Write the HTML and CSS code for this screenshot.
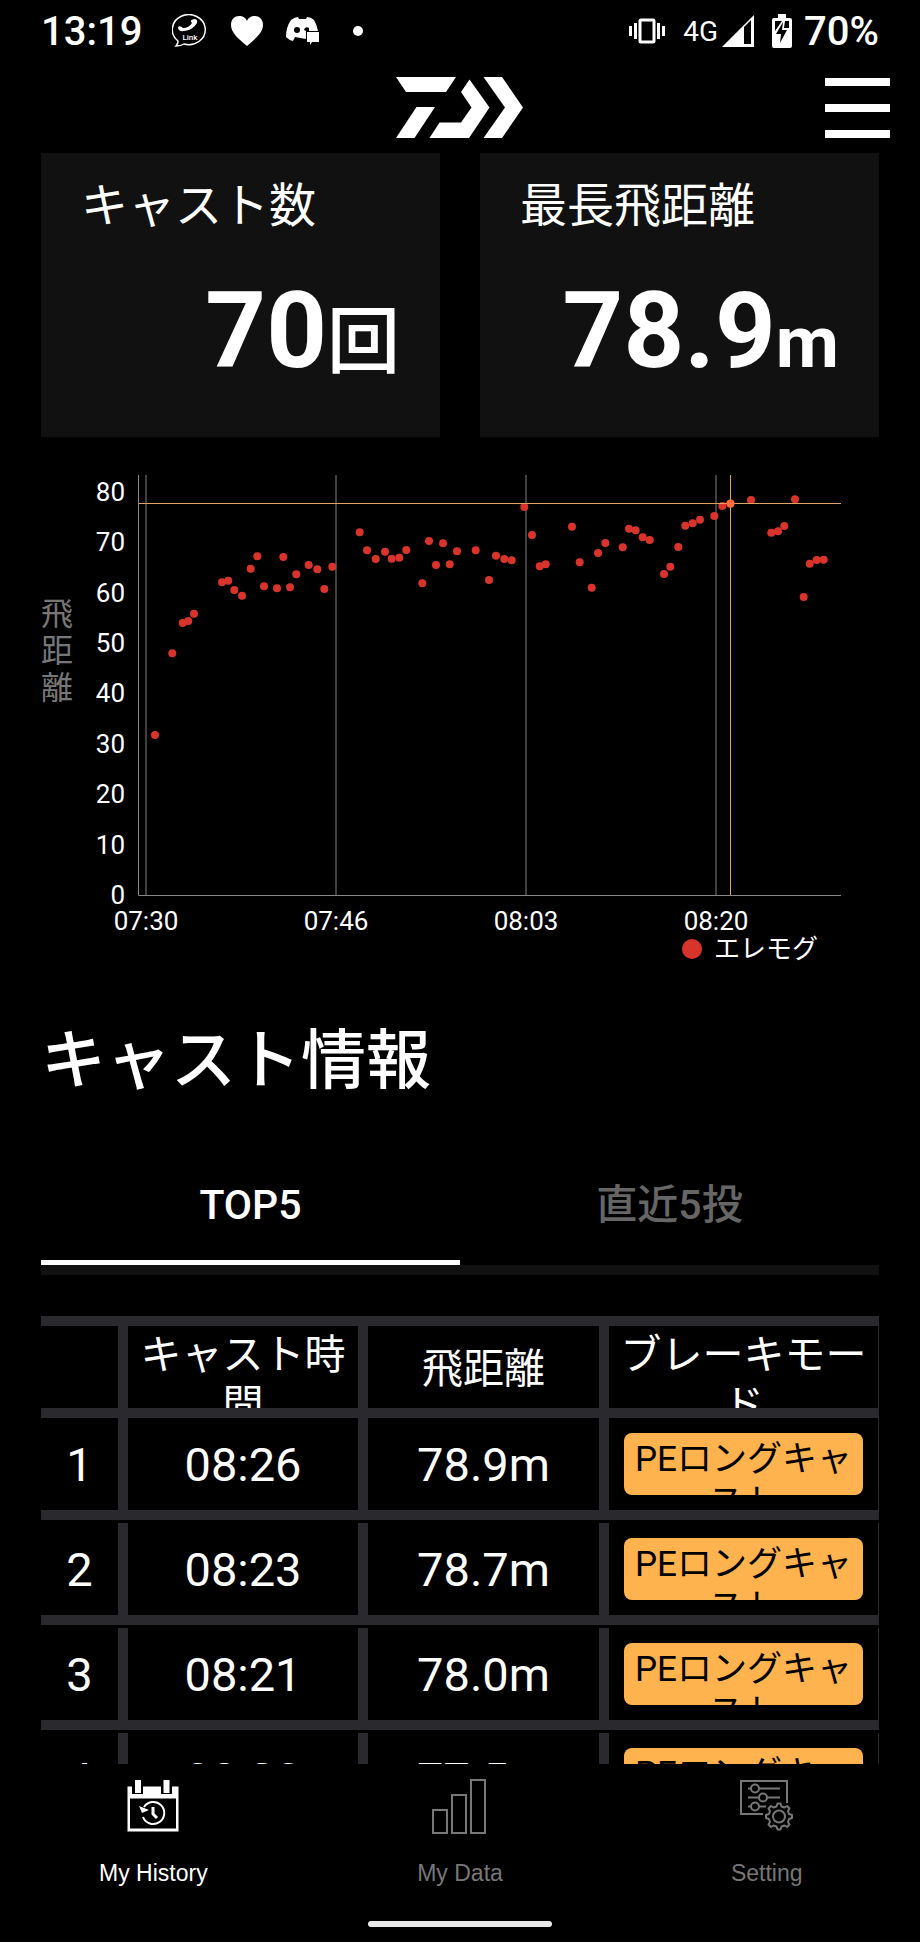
FILE: index.html
```html
<!DOCTYPE html>
<html lang="ja">
<head>
    <meta charset="UTF-8">
    <meta name="viewport" content="width=device-width, initial-scale=1.0">
    <title>キャスト情報</title>
    <link rel="stylesheet" href="styles.css">
</head>
<body>
    <!-- ステータスバー -->
    <div class="status-bar">
        <span class="clock">13:19</span>
        <div class="status-icons">
            <svg width="36" height="34" viewBox="0 0 36 34">
                <path d="M6 27 A16.500 15 0 1 1 12 30 Q9 32 4 32 Q6 30 6 27Z" fill="none" stroke="#fff" stroke-width="1.500"/>
                <path d="M6 13 Q8 11 11 14 Q17 14 20 9 Q17 6 22 5 Q26 5 25 9 Q21 16 12 17 Q6 18 6 13Z" fill="#fff"/>
                <text class="link-text" x="18" y="26" text-anchor="middle">Link</text>
            </svg>
            <svg width="32" height="32" viewBox="0 0 32 32">
                <path d="M16 31 C8 24 0 18 0 10 C0 4 4 1 8 1 C12 1 15 3 16 6 C17 3 20 1 24 1 C28 1 32 4 32 10 C32 18 24 24 16 31Z" fill="#fff"/>
            </svg>
            <svg width="34" height="30" viewBox="0 0 34 30">
                <path d="M5 4 Q9 1 12 1 L13 3 H20 L21 1 Q25 1 28 4 Q31 9 32 15 H20 V23 L9 21 L7 25 Q3 24 0 21 Q0 11 5 4Z" fill="#fff"/>
                <ellipse cx="11" cy="14" rx="3" ry="3" fill="#000"/>
                <path d="M18 14 a3 3 0 0 1 5 -2 V15 H20Z" fill="#000"/>
                <path d="M21 16 H33 V26 H26 L24 29 V26 H21Z" fill="#fff"/>
            </svg>
            <svg class="more-dot" width="10" height="10" viewBox="0 0 10 10">
                <circle cx="5" cy="5" r="5" fill="#fff"/>
            </svg>
        </div>
        <div class="status-right">
            <svg class="vibrate" width="36" height="28" viewBox="0 0 36 28">
                <rect x="11" y="3" width="14" height="22" rx="1" fill="none" stroke="#fff" stroke-width="3"/>
                <path d="M1.500 9v10M6.500 6v16M29.500 6v16M34.500 9v10" stroke="#fff" stroke-width="3"/>
            </svg>
            <span class="network">4G</span>
            <svg class="signal" width="32" height="32" viewBox="0 0 32 32">
                <path d="M0 32 L32 0 V32Z M22 12 V29 H29 V5Z" fill="#fff" fill-rule="evenodd"/>
            </svg>
            <svg width="20" height="34" viewBox="0 0 20 34">
                <path d="M6 0 H14 V4 H18 Q20 4 20 6 V32 Q20 34 18 34 H2 Q0 34 0 32 V6 Q0 4 2 4 H6Z" fill="#fff"/>
                <path d="M3 7 H10 L3 17Z M13 7 H17 V14 H12Z" fill="#000"/>
                <path d="M11 8 L4 20 H9 L8 29 L15 16 H10Z" fill="#000"/>
            </svg>
            <span class="battery">70%</span>
        </div>
    </div>

    <header class="header">
        <svg class="logo" width="128" height="61" viewBox="0 0 128 61">
            <path d="M0 0H60L50 15H10Z"/>
            <path d="M20.500 30H39L18.500 61H0Z"/>
            <path d="M43.500 45.500H65L75.500 30.500L65 15L73.500 2.500L93.500 30.500L73 61H33.500Z"/>
            <path d="M87.500 0H106L127 30.500L106 61H87.500L109 30.500Z"/>
        </svg>
        <button class="menu-button" type="button" aria-label="メニュー">
            <span></span>
            <span></span>
            <span></span>
        </button>
    </header>

    <main class="content">
        <section class="summary">
            <div class="card">
                <h2>キャスト数</h2>
                <p class="value">70<span class="unit-count">回</span></p>
            </div>
            <div class="card">
                <h2>最長飛距離</h2>
                <p class="value">78.9<span>m</span></p>
            </div>
        </section>

        <!-- 飛距離グラフ -->
        <svg class="chart" viewBox="0 0 838 504">
            <text class="axis-title">
                <tspan x="0" y="165">飛</tspan>
                <tspan x="0" y="202">距</tspan>
                <tspan x="0" y="239">離</tspan>
            </text>
            <g class="y-labels">
                <text x="84" y="41">80</text>
                <text x="84" y="91">70</text>
                <text x="84" y="142">60</text>
                <text x="84" y="192">50</text>
                <text x="84" y="242">40</text>
                <text x="84" y="293">30</text>
                <text x="84" y="343">20</text>
                <text x="84" y="394">10</text>
                <text x="84" y="444">0</text>
            </g>
            <path class="grid" d="M105 15V435M295 15V435M485 15V435M675 15V435"/>
            <path class="axis" d="M97.500 15V435.500H800"/>
            <g class="x-labels">
                <text x="105" y="470">07:30</text>
                <text x="295" y="470">07:46</text>
                <text x="485" y="470">08:03</text>
                <text x="675" y="470">08:20</text>
            </g>
            <g class="dots" id="dots"></g>
            <path class="cursor" d="M98 43.500H800M689.500 15V435"/>
            <circle class="selected" cx="689.500" cy="43.500" r="4"/>
            <circle class="legend-dot" cx="651" cy="489" r="10"/>
            <text class="legend" x="673" y="498">エレモグ</text>
        </svg>

        <h1>キャスト情報</h1>

        <div class="tabs" role="tablist">
            <button class="tab active" type="button" role="tab" aria-selected="true">TOP5</button>
            <button class="tab" type="button" role="tab" aria-selected="false">直近5投</button>
        </div>

        <table class="cast-table">
            <colgroup>
                <col class="col-rank">
                <col class="col-time">
                <col>
                <col class="col-brake">
            </colgroup>
            <thead>
                <tr>
                    <th></th>
                    <th><div class="head">キャスト時間</div></th>
                    <th><div class="head">飛距離</div></th>
                    <th><div class="head">ブレーキモード</div></th>
                </tr>
            </thead>
            <tbody>
                <tr>
                    <td>1</td>
                    <td>08:26</td>
                    <td>78.9m</td>
                    <td><div class="badge">PEロングキャスト</div></td>
                </tr>
                <tr>
                    <td>2</td>
                    <td>08:23</td>
                    <td>78.7m</td>
                    <td><div class="badge">PEロングキャスト</div></td>
                </tr>
                <tr>
                    <td>3</td>
                    <td>08:21</td>
                    <td>78.0m</td>
                    <td><div class="badge">PEロングキャスト</div></td>
                </tr>
                <tr>
                    <td>4</td>
                    <td>08:20</td>
                    <td>77.5m</td>
                    <td><div class="badge">PEロングキャスト</div></td>
                </tr>
            </tbody>
        </table>
    </main>

    <nav class="bottom-nav">
        <div class="nav-items">
            <a href="#history" class="active">
                <svg width="54" height="54" viewBox="0 0 54 54">
                    <path d="M1.500 7.500H6V15H17V7.500H35V15H46V7.500H52.500V52.500H1.500Z M4 19.500V49.500H50V19.500Z" fill="currentColor" fill-rule="evenodd"/>
                    <path d="M9 1H15V14H9ZM37.500 1H43.500V14H37.500Z" fill="currentColor"/>
                    <path d="M17 38 A11 11 0 1 0 18 28" fill="none" stroke="currentColor" stroke-width="2"/>
                    <path d="M13 27L16 34L23 31Z" fill="currentColor"/>
                    <path d="M27 28V35L31 39" fill="none" stroke="currentColor" stroke-width="3"/>
                </svg>
                My History
            </a>
            <a href="#data">
                <svg width="54" height="54" viewBox="0 0 54 54">
                    <path d="M0 31H14V54H0ZM19 16H33V54H19ZM38 1H52V54H38Z" fill="none" stroke="currentColor" stroke-width="2"/>
                </svg>
                My Data
            </a>
            <a href="#setting">
                <svg width="54" height="54" viewBox="0 0 54 54">
                    <path d="M47 24V2H1V35H23" fill="none" stroke="currentColor" stroke-width="2"/>
                    <path d="M8 9.500H11M19 9.500H40M8 18.500H19M27 18.500H40M8 27.500H11M19 27.500H26" stroke="currentColor" stroke-width="2"/>
                    <g fill="none" stroke="currentColor" stroke-width="2">
                        <circle cx="15" cy="9.500" r="4"/>
                        <circle cx="23" cy="18.500" r="4"/>
                        <circle cx="15" cy="27.500" r="4"/>
                        <circle cx="39" cy="37.500" r="6"/>
                        <path d="M36.500 27.500 L37.500 24.500 H40.500 L41.500 27.500 L44.500 28.500 L47 27 L49.500 29.500 L48 32 L49 35 L52 36 V39 L49 40 L48 43 L49.500 45.500 L47 48 L44.500 46.500 L41.500 47.500 L40.500 50.500 H37.500 L36.500 47.500 L33.500 46.500 L31 48 L28.500 45.500 L30 43 L29 40 L26 39 V36 L29 35 L30 32 L28.500 29.500 L31 27 L33.500 28.500Z" stroke-linejoin="round"/>
                    </g>
                </svg>
                Setting
            </a>
        </div>
        <div class="home-bar"></div>
    </nav>

    <script src="chart.js"></script>
</body>
</html>
```
FILE: styles.css
```css
:root {
    --bg-color: #000;
    --card-bg: #111;
    --text-color: #fff;
    --muted: #666;
    --line: #2a292e;
    --red: #d9342b;
    --orange: #ffb34e;
}

* {
    box-sizing: border-box;
}

body {
    margin: 0;
    height: 100vh;
    display: flex;
    flex-direction: column;
    overflow: hidden;
    background-color: var(--bg-color);
    color: var(--text-color);
    font-family: Roboto, "Noto Sans CJK JP", sans-serif;
}

h1, h2, p {
    margin: 0;
}

button {
    background: none;
    border: none;
    padding: 0;
    color: inherit;
    font-family: inherit;
}

/* ステータスバー */
.status-bar {
    display: flex;
    align-items: center;
    height: 62px;
    padding: 0 41px;
    font-size: 40px;
    font-weight: 500;
}

.status-icons,
.status-right {
    display: flex;
    align-items: center;
}

.status-icons {
    gap: 23px;
    margin-left: 30px;
}

.more-dot {
    margin-left: 10px;
}

.status-right {
    margin-left: auto;
    gap: 12px;
}

.link-text {
    font-size: 8px;
    font-weight: 500;
    fill: #fff;
}

.vibrate {
    margin-right: 6px;
}

.network {
    font-size: 28px;
    font-weight: 400;
}

.signal {
    margin: 0 6px 0 -8px;
}

.header {
    display: grid;
    grid-template-columns: 1fr auto 1fr;
    align-items: center;
    height: 91px;
    padding: 0 30px;
}

.logo {
    grid-column: 2;
    fill: #fff;
}

.menu-button {
    justify-self: end;
    display: flex;
    flex-direction: column;
    gap: 18px;
    width: 65px;
}

.menu-button span {
    height: 8px;
    background-color: #fff;
}

.content {
    flex: 1;
    min-height: 0;
    overflow: hidden;
    padding: 0 41px;
}

/* 集計カード */
.summary {
    display: grid;
    grid-template-columns: 1fr 1fr;
    gap: 40px;
}

.card {
    height: 284px;
    padding: 25px 40px;
    background-color: var(--card-bg);
}

.card h2 {
    font-size: 47px;
    font-weight: 400;
    line-height: 56px;
}

.value {
    margin-top: 61px;
    font-size: 106px;
    font-weight: 700;
    line-height: 72px;
    text-align: right;
}

.value span {
    font-size: 73px;
}

.value .unit-count {
    font-weight: 500;
}

/* グラフ */
.chart {
    display: block;
    width: 100%;
    margin-top: 23px;
    font-size: 26px;
    fill: #fff;
}

.axis-title {
    font-size: 32px;
    fill: #777;
}

.y-labels {
    text-anchor: end;
}

.x-labels {
    text-anchor: middle;
}

.grid,
.axis,
.cursor {
    fill: none;
    stroke-width: 1;
}

.grid {
    stroke: #404040;
    stroke-width: 2;
}

.axis {
    stroke: #888;
}

.cursor {
    stroke: #e2a263;
}

.dots,
.legend-dot {
    fill: var(--red);
}

.selected {
    fill: #ff6b3d;
}

h1 {
    margin-top: 57px;
    font-size: 65px;
    font-weight: 500;
    line-height: 80px;
}

.tabs {
    display: flex;
    margin-top: 48px;
    border-bottom: 10px solid var(--card-bg);
}

.tab {
    flex: 1;
    height: 116px;
    border-bottom: 5px solid transparent;
    color: var(--muted);
    font-size: 41px;
    font-weight: 500;
    line-height: 48px;
}

.tab.active {
    color: var(--text-color);
    border-bottom-color: #fff;
}

/* キャスト一覧 */
.cast-table {
    width: 100%;
    margin-top: 41px;
    table-layout: fixed;
    border-collapse: separate;
    border-spacing: 0;
    border-top: 10px solid var(--line);
    font-size: 47px;
    text-align: center;
}

.col-rank {
    width: 87px;
}

.col-time {
    width: 240px;
}

.col-brake {
    width: 270px;
}

.cast-table th,
.cast-table td {
    padding: 0 10px 0 0;
    border-bottom: 10px solid var(--line);
    background: linear-gradient(var(--line), var(--line)) right / 10px 100% no-repeat padding-box;
    font-weight: 400;
}

.cast-table th {
    height: 92px;
    font-size: 41px;
}

.cast-table td {
    height: 102px;
    padding-top: 1px;
}

.cast-table th:last-child,
.cast-table td:last-child {
    padding: 0 1px 0 0;
    background-size: 1px 100%;
}

.cast-table tbody tr + tr td {
    height: 105px;
    border-top: 3px solid var(--bg-color);
}

.head {
    display: flex;
    flex-direction: column;
    justify-content: safe center;
    height: 82px;
    padding-top: 4px;
    line-height: 50px;
    overflow: hidden;
}

.badge {
    height: 62px;
    margin: 0 15px;
    padding: 5px 10px;
    border-radius: 8px;
    background-color: var(--orange);
    color: #000;
    font-size: 35px;
    line-height: 43px;
    overflow: hidden;
}

/* 下部ナビ */
.bottom-nav {
    display: flex;
    flex-direction: column;
    align-items: center;
    justify-content: space-between;
    height: 178px;
    padding: 15px 0;
}

.nav-items {
    display: flex;
    width: 100%;
}

.nav-items a {
    flex: 1;
    display: flex;
    flex-direction: column;
    align-items: center;
    gap: 26px;
    color: #777;
    font-family: "Liberation Sans", Arial, sans-serif;
    font-size: 23px;
    line-height: 28px;
    text-decoration: none;
}

.nav-items svg {
    overflow: visible;
}

.nav-items a.active {
    color: #fff;
}

.home-bar {
    width: 20%;
    height: 6px;
    border-radius: 3px;
    background-color: #e8e8e8;
}
```
FILE: chart.js
```javascript
// キャストごとのプロット位置
const casts = [
    [114, 275], [131.3, 193.3], [141.7, 163], [147.3, 161], [153, 153.7],
    [181, 122.3], [187.3, 120.7], [193.3, 130], [201, 135.7], [209.7, 108.7],
    [216.3, 96.3], [223, 126.3], [236, 128.3], [242.3, 97], [249, 127.3],
    [255.3, 114.3], [267.7, 105], [276.3, 109.3], [283.3, 129], [291.3, 106.7],
    [318.7, 72.3], [326, 90.3], [334.7, 99], [344, 91.7], [350.7, 98.7],
    [358.3, 97.7], [365.3, 90], [381.3, 123.3], [388, 81], [395, 105],
    [402, 83.3], [408.7, 104.3], [416, 91.3], [434.7, 90.3], [448, 120],
    [455, 95.7], [463.3, 99], [470.7, 100.3], [483.3, 47], [491, 75],
    [498.7, 106.3], [504.7, 104.3], [531, 66.7], [538.7, 102.3], [550.7, 127.7],
    [557, 93], [564.3, 83], [581.7, 87.3], [588, 68.7], [594.7, 70.3],
    [601.7, 77.3], [608.7, 80], [623, 114], [629.3, 106.7], [637.3, 87],
    [644.3, 65.7], [651.7, 63.3], [659, 59.7], [673.3, 56], [681.3, 46],
    [689.3, 43.7], [710, 40], [730.3, 72.7], [737, 71.3], [743.3, 66],
    [754, 39.3], [762.7, 137], [768.7, 103.7], [775.7, 100], [782.7, 99.7]
];

const dots = document.getElementById('dots');

casts.forEach(([x, y]) => {
    const dot = document.createElementNS('http://www.w3.org/2000/svg', 'circle');
    dot.setAttribute('cx', x);
    dot.setAttribute('cy', y);
    dot.setAttribute('r', 4);
    dots.appendChild(dot);
});
```
